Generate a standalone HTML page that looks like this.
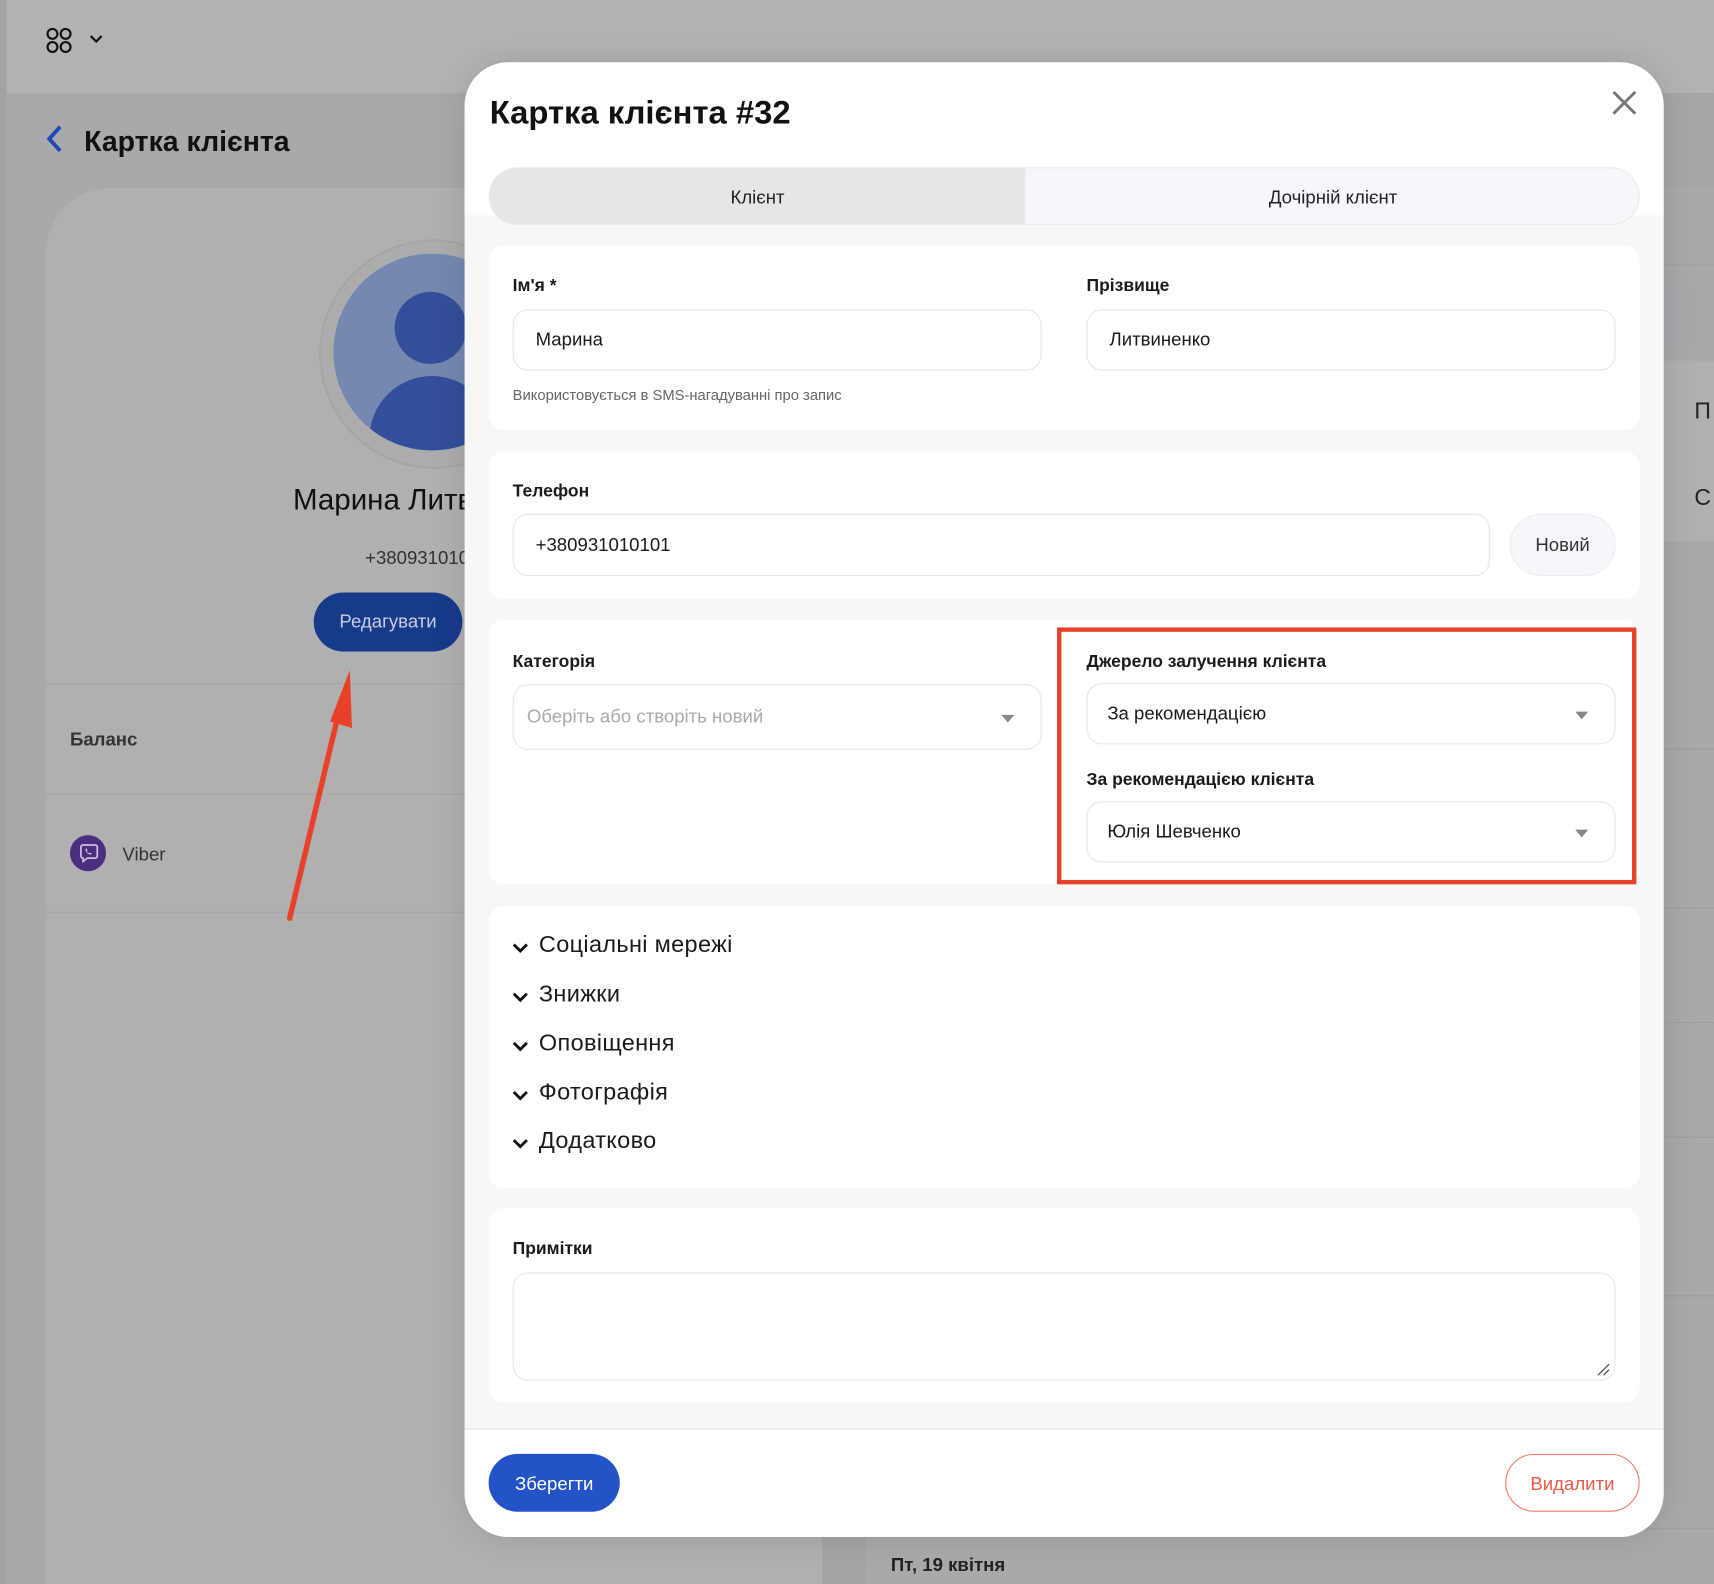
<!DOCTYPE html>
<html><head><meta charset="utf-8">
<style>
html,body{margin:0;padding:0;width:1714px;height:1584px;overflow:hidden;background:#ababab;}
#w{position:absolute;left:0;top:0;width:1568px;height:1449px;transform:scale(1.09311);transform-origin:0 0;font-family:"Liberation Sans",sans-serif;color:#1a1a1a;background:#a9a9ab;overflow:hidden}
.a{position:absolute}
.lbl{position:absolute;font-weight:bold;font-size:16px;color:#1a1a1a}
.inp{position:absolute;background:#fff;border:1px solid #e6e6e8;border-radius:14px;box-sizing:border-box;font-size:17px;padding-left:20px;display:flex;align-items:center}
.card{position:absolute;background:#fff;border-radius:14px;left:22px;width:1053px}
.caret{position:absolute;right:24px;top:50%;margin-top:-2px;width:0;height:0;border-left:6px solid transparent;border-right:6px solid transparent;border-top:7px solid #888}
.acc{position:absolute;left:45px;font-size:21.5px;color:#1a1a1a;letter-spacing:.3px}
.acc svg{position:absolute;left:-1px;top:9px}
.acc span{margin-left:24px}
</style></head><body><div id="w">
<div class="a" style="left:6px;top:0;width:1562px;height:85px;background:#b3b3b3"></div>
<div class="a" style="left:0;top:0;width:6px;height:1449px;background:#a3a3a5"></div>
<svg class="a" style="left:42px;top:24px" width="56" height="26"><g fill="none" stroke="#111" stroke-width="2"><circle cx="6" cy="7" r="4.5"/><circle cx="18" cy="7" r="4.5"/><circle cx="6" cy="19" r="4.5"/><circle cx="18" cy="19" r="4.5"/><path d="M41 9l5 5 5-5"/></g></svg>
<svg class="a" style="left:40px;top:113px" width="20" height="28"><path d="M15 3L5 14l10 11" fill="none" stroke="#1f47b8" stroke-width="3.5"/></svg>
<div class="a" style="left:77px;top:114px;font-size:26px;font-weight:bold;color:#111">Картка клієнта</div>
<div class="a" style="left:42px;top:172px;width:710px;height:1300px;background:#b0b0b0;border-radius:60px 0 0 0"></div>
<div class="a" style="left:292px;top:219px;width:206px;height:206px;border-radius:50%;background:#acacac;border:2px solid #a5a5a5"></div>
<div class="a" style="left:305px;top:232px;width:180px;height:180px;border-radius:50%;background:#7588b0;overflow:hidden">
 <div class="a" style="left:56px;top:35px;width:66px;height:66px;border-radius:50%;background:#344f99"></div>
 <div class="a" style="left:33px;top:112px;width:114px;height:90px;border-radius:57px 57px 0 0;background:#344f99"></div>
</div>
<div class="a" style="left:268px;top:442px;font-size:27px;color:#111">Марина Литвиненко</div>
<div class="a" style="left:334px;top:501px;font-size:17px;color:#333">+380931010101</div>
<div class="a" style="left:287px;top:542px;width:136px;height:54px;border-radius:27px;background:#173a8a;color:#c8d0e6;font-size:17px;display:flex;align-items:center;justify-content:center">Редагувати</div>
<div class="a" style="left:42px;top:625px;width:710px;height:1px;background:#a6a6a6"></div>
<div class="a" style="left:64px;top:667px;font-size:17px;font-weight:bold;color:#333">Баланс</div>
<div class="a" style="left:42px;top:726px;width:710px;height:1px;background:#a6a6a6"></div>
<div class="a" style="left:64px;top:764px;width:33px;height:33px;border-radius:50%;background:#4a2f7e"></div>
<svg class="a" style="left:70px;top:769px" width="22" height="22"><path d="M5 4h12a2 2 0 0 1 2 2v8a2 2 0 0 1-2 2h-7l-4 3v-3a2 2 0 0 1-2-2V6a2 2 0 0 1 2-2z" fill="none" stroke="#cbbfe0" stroke-width="1.6"/><path d="M8 8q1 4 5 5l1-1-1.5-1-1 .6q-1.5-.8-2-2l.6-1-1-1.5z" fill="#cbbfe0"/></svg>
<div class="a" style="left:112px;top:772px;font-size:17px;color:#333">Viber</div>
<div class="a" style="left:42px;top:834px;width:710px;height:1px;background:#a6a6a6"></div>
<svg class="a" style="left:255px;top:605px" width="80" height="245"><path d="M10 235L57 38" stroke="#e8412a" stroke-width="5" stroke-linecap="round"/><path d="M65 8L47 55l20 6z" fill="#e8412a"/></svg>
<div class="a" style="left:1522px;top:85px;width:46px;height:85px;background:#a6a6a8"></div>
<div class="a" style="left:1522px;top:242px;width:46px;height:1px;background:#9e9e9e"></div>
<div class="a" style="left:1522px;top:260px;width:46px;height:55px;background:#a8a8ab"></div>
<div class="a" style="left:1522px;top:330px;width:46px;height:165px;background:#b0b0b0"></div>
<div class="a" style="left:1550px;top:365px;font-size:21px;color:#222">П</div>
<div class="a" style="left:1550px;top:444px;font-size:21px;color:#222">С</div>
<div class="a" style="left:1522px;top:685px;width:46px;height:1px;background:#9e9e9e"></div>
<div class="a" style="left:1522px;top:830px;width:46px;height:1px;background:#9e9e9e"></div>
<div class="a" style="left:1522px;top:935px;width:46px;height:1px;background:#9e9e9e"></div>
<div class="a" style="left:1522px;top:1040px;width:46px;height:1px;background:#9e9e9e"></div>
<div class="a" style="left:1522px;top:1185px;width:46px;height:1px;background:#9e9e9e"></div>
<div class="a" style="left:752px;top:1406px;width:40px;height:43px;background:#a5a5a5"></div>
<div class="a" style="left:792px;top:1398px;width:776px;height:1px;background:#a0a0a0"></div>
<div class="a" style="left:815px;top:1422px;font-size:17px;font-weight:bold;color:#222">Пт, 19 квітня</div>
<div class="a" style="left:425px;top:57px;width:1097px;height:1349px;background:#f7f7f7;border-radius:40px;overflow:hidden;box-shadow:0 0 30px rgba(0,0,0,.12)">
 <div class="a" style="left:0;top:0;width:1097px;height:140px;background:#fff"></div>
 <div class="a" style="left:23px;top:30px;font-size:30px;font-weight:bold;color:#111">Картка клієнта #32</div>
 <svg class="a" style="left:1048px;top:24px" width="26" height="26"><path d="M3 3l20 20M23 3L3 23" stroke="#777" stroke-width="2.6"/></svg>
 <div class="a" style="left:22px;top:96px;width:1053px;height:53px;border-radius:27px;background:#f6f7fb;border:1px solid #e8e9ef;box-sizing:border-box;overflow:hidden">
  <div class="a" style="left:0;top:0;width:490px;height:53px;background:#e6e6e6"></div>
  <div class="a" style="left:0;top:17px;width:490px;text-align:center;font-size:17px;color:#222">Клієнт</div>
  <div class="a" style="left:490px;top:17px;width:563px;text-align:center;font-size:17px;color:#222">Дочірній клієнт</div>
 </div>
 <div class="card" style="top:168px;height:168px">
  <div class="lbl" style="left:22px;top:28px">Ім'я *</div>
  <div class="inp" style="left:22px;top:58px;width:484px;height:56px">Марина</div>
  <div class="lbl" style="left:547px;top:28px">Прізвище</div>
  <div class="inp" style="left:547px;top:58px;width:484px;height:56px">Литвиненко</div>
  <div class="a" style="left:22px;top:129px;font-size:13.5px;color:#666">Використовується в SMS-нагадуванні про запис</div>
 </div>
 <div class="card" style="top:356px;height:135px">
  <div class="lbl" style="left:22px;top:28px">Телефон</div>
  <div class="inp" style="left:22px;top:57px;width:894px;height:57px">+380931010101</div>
  <div class="a" style="left:934px;top:57px;width:97px;height:57px;border-radius:29px;background:#f6f7fb;border:1px solid #ebecf2;box-sizing:border-box;display:flex;align-items:center;justify-content:center;font-size:17px;color:#333">Новий</div>
 </div>
 <div class="card" style="top:510px;height:242px">
  <div class="lbl" style="left:22px;top:30px">Категорія</div>
  <div class="inp" style="left:22px;top:59px;width:484px;height:60px;color:#aaa;padding-left:12px">Оберіть або створіть новий<div class="caret"></div></div>
  <div class="lbl" style="left:547px;top:30px">Джерело залучення клієнта</div>
  <div class="inp" style="left:547px;top:58px;width:484px;height:56px;padding-left:18px">За рекомендацією<div class="caret"></div></div>
  <div class="lbl" style="left:547px;top:138px">За рекомендацією клієнта</div>
  <div class="inp" style="left:547px;top:166px;width:484px;height:56px;padding-left:18px">Юлія Шевченко<div class="caret"></div></div>
 </div>
 <div class="a" style="left:542px;top:517px;width:530px;height:235px;border:4px solid #e8412a;box-sizing:border-box"></div>
 <div class="card" style="top:772px;height:258px">
  <div class="acc" style="left:22px;top:23px"><svg width="16" height="12"><path d="M2 3l6 6 6-6" fill="none" stroke="#111" stroke-width="2.6"/></svg><span>Соціальні мережі</span></div>
  <div class="acc" style="left:22px;top:68px"><svg width="16" height="12"><path d="M2 3l6 6 6-6" fill="none" stroke="#111" stroke-width="2.6"/></svg><span>Знижки</span></div>
  <div class="acc" style="left:22px;top:113px"><svg width="16" height="12"><path d="M2 3l6 6 6-6" fill="none" stroke="#111" stroke-width="2.6"/></svg><span>Оповіщення</span></div>
  <div class="acc" style="left:22px;top:158px"><svg width="16" height="12"><path d="M2 3l6 6 6-6" fill="none" stroke="#111" stroke-width="2.6"/></svg><span>Фотографія</span></div>
  <div class="acc" style="left:22px;top:202px"><svg width="16" height="12"><path d="M2 3l6 6 6-6" fill="none" stroke="#111" stroke-width="2.6"/></svg><span>Додатково</span></div>
 </div>
 <div class="card" style="top:1048px;height:178px">
  <div class="lbl" style="left:22px;top:29px">Примітки</div>
  <div class="a" style="left:22px;top:59px;width:1009px;height:99px;border:1px solid #e6e6e8;border-radius:14px;box-sizing:border-box;background:#fff"></div>
  <svg class="a" style="left:1013px;top:141px" width="14" height="14"><path d="M2 12L12 2M7 12l5-5" stroke="#555" stroke-width="1.2"/></svg>
 </div>
 <div class="a" style="left:0;top:1250px;width:1097px;height:99px;background:#fff;border-top:1px solid #e4e4e4"></div>
 <div class="a" style="left:22px;top:1273px;width:120px;height:53px;border-radius:27px;background:#2453c7;color:#fff;font-size:17px;display:flex;align-items:center;justify-content:center;padding-top:2px;box-sizing:border-box">Зберегти</div>
 <div class="a" style="left:952px;top:1273px;width:123px;height:53px;border-radius:27px;border:1px solid #f07a6a;box-sizing:border-box;color:#ee5a46;font-size:17px;display:flex;align-items:center;justify-content:center;padding-top:2px">Видалити</div>
</div>
</div></body></html>
